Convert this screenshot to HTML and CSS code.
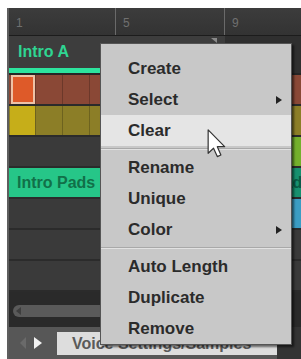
FILE: index.html
```html
<html>
<head>
    <title>Scene Context Menu</title>
    <link rel="stylesheet" href="styles.css">
</head>
<body>
    <div class="caption"><span>Editing</span><span class="cap-b">Using</span></div>

    <div class="app">
        <div class="ruler">
            <div class="bar">1</div>
            <div class="bar">5</div>
            <div class="bar">9</div>
        </div>

        <div class="scene-row">
            <div class="scene">Intro A<i class="scene-end"></i></div>
        </div>

        <div class="tracks">
            <div class="track">
                <div class="clip clip-wide clip-red"><span class="cell cell-selected"></span></div>
            </div>
            <div class="track">
                <div class="clip clip-wide clip-yellow"><span class="cell cell-yellow"></span></div>
            </div>
            <div class="track">
                <div class="clip clip-end clip-lime"></div>
            </div>
            <div class="track">
                <div class="clip clip-scene clip-mint">Intro Pads</div>
                <div class="clip clip-teal">Intro Pads</div>
            </div>
            <div class="track">
                <div class="clip clip-end clip-blue"></div>
            </div>
            <div class="track"></div>
            <div class="track"></div>
        </div>

        <div class="scroll-area">
            <div class="scrollbar"><i class="scroll-arrow"></i></div>
        </div>

        <div class="footer">
            <i class="nav-prev"></i>
            <i class="nav-next"></i>
            <div class="field">Voice Settings/Samples</div>
            <div class="footer-end"></div>
        </div>

        <ul class="menu">
            <li class="menu-item">Create</li>
            <li class="menu-item">Select<i class="submenu"></i></li>
            <li class="menu-item active">Clear</li>
            <li class="menu-sep"></li>
            <li class="menu-item">Rename</li>
            <li class="menu-item">Unique</li>
            <li class="menu-item">Color<i class="submenu"></i></li>
            <li class="menu-sep"></li>
            <li class="menu-item">Auto Length</li>
            <li class="menu-item">Duplicate</li>
            <li class="menu-item">Remove</li>
        </ul>

        <svg class="cursor" width="20" height="30" viewBox="0 0 13 20">
            <path d="M0.6 0.6 L0.6 16.2 L4.2 12.8 L6.7 18.4 L9.1 17.3 L6.7 11.8 L11.6 11.8 Z" fill="#ffffff" stroke="#333333" stroke-width="0.8" stroke-linejoin="round"/>
        </svg>
    </div>
</body>
</html>
```

FILE: styles.css
```css
* {
    box-sizing: border-box;
}

body {
    margin: 0;
    background-color: #ffffff;
    font-family: "Liberation Sans", Arial, sans-serif;
}

.caption {
    display: flex;
    height: 8px;
    overflow: hidden;
    padding-left: 58px;
    font-size: 18px;
    line-height: 20px;
    color: #555;
}

.caption span {
    margin-top: -20px;
}

.caption .cap-b {
    margin-left: 38px;
}

.app {
    position: relative;
    height: 351px;
    margin-left: 7px;
    border-left: 2px solid #5e5e5e;
    background-color: #2b2b2b;
    overflow: hidden;
}

/* ruler */
.ruler {
    display: grid;
    grid-template-columns: 107px 109px 1fr;
    height: 28px;
    border-bottom: 1px solid #1c1c1c;
    background: linear-gradient(#3c3c3c, #333);
}

.bar {
    padding: 8px 0 0 7px;
    border-right: 1px solid #6a6a6a;
    font-size: 12px;
    color: #707070;
}

.bar:last-child {
    border-right: none;
}

/* scene row */
.scene-row {
    display: grid;
    grid-template-columns: 216px 1fr;
    height: 39px;
    border-bottom: 2px solid #262626;
    background-color: #2f2f2f;
}

.scene {
    display: flex;
    align-items: center;
    justify-content: space-between;
    padding-left: 9px;
    border-bottom: 5px solid #2de49e;
    background-color: #3d3d3d;
    font-size: 16px;
    font-weight: bold;
    color: #2fd592;
}

.scene-end {
    align-self: flex-start;
    margin: 2px 8px 0 0;
    border-top: 5px solid #8a8a8a;
    border-left: 6px solid transparent;
}

/* tracks */
.track {
    display: grid;
    grid-template-columns: 107px 109px 1fr;
    height: 31px;
    border-bottom: 2px solid #2b2b2b;
    background-color: #3a3a3a;
}

.clip {
    height: 29px;
    overflow: hidden;
    white-space: nowrap;
}

.clip-wide {
    grid-column: 1 / 4;
}

.clip-scene {
    grid-column: 1 / 3;
}

.clip-end {
    grid-column: 3;
}

.clip-red, .clip-yellow {
    background-image: repeating-linear-gradient(90deg, transparent 0 26px, rgba(0, 0, 0, 0.22) 26px 27px);
}

.clip-red {
    background-color: #8a4836;
}

.clip-yellow {
    background-color: #8c7e27;
}

.cell {
    display: block;
    height: 29px;
}

.cell-selected {
    width: 24px;
    margin-left: 2px;
    border: 2px solid #eec2a6;
    background-color: #de5a29;
}

.cell-yellow {
    width: 25px;
    margin-left: 1px;
    background-color: #c6ae19;
}

.clip-lime {
    background-color: #74b02c;
}

.clip-mint, .clip-teal {
    padding: 6px 0 0 8px;
    font-size: 16px;
    font-weight: bold;
}

.clip-mint {
    background-color: #26c688;
    color: #117048;
}

.clip-teal {
    background-color: #17906f;
    color: #0b5a44;
}

.clip-blue {
    background-color: #3b9dc4;
}

/* scroll bar */
.scroll-area {
    height: 35px;
    padding: 13px 0 0 4px;
    background-color: #2a2a2a;
}

.scrollbar {
    display: flex;
    align-items: center;
    width: 240px;
    height: 12px;
    padding-left: 3px;
    border-radius: 6px;
    background-color: #5a5a5a;
}

.scroll-arrow {
    border-right: 5px solid #3e3e3e;
    border-top: 4px solid transparent;
    border-bottom: 4px solid transparent;
}

/* footer */
.footer {
    display: flex;
    align-items: center;
    height: 32px;
    padding-left: 11px;
    background-color: #575757;
}

.nav-prev {
    border-right: 6px solid #6a6a6a;
    border-top: 6px solid transparent;
    border-bottom: 6px solid transparent;
}

.nav-next {
    margin-left: 8px;
    border-left: 8px solid #f2f2f2;
    border-top: 6px solid transparent;
    border-bottom: 6px solid transparent;
}

.field {
    width: 220px;
    height: 23px;
    margin-left: 15px;
    padding: 3px 0 0 15px;
    background-color: #dddddd;
    font-size: 16px;
    font-weight: bold;
    color: #5a5a5a;
    white-space: nowrap;
    overflow: hidden;
}

.footer-end {
    align-self: stretch;
    flex: 1;
    background-color: #343434;
}

/* context menu */
.menu {
    position: absolute;
    left: 91px;
    top: 35px;
    width: 192px;
    margin: 0;
    padding: 9px 0 0;
    list-style: none;
    border: 1px solid #555;
    background-color: #c8c8c8;
    box-shadow: 2px 2px 2px rgba(0, 0, 0, 0.55);
}

.menu-item {
    display: flex;
    align-items: center;
    height: 31px;
    padding-left: 27px;
    font-size: 17px;
    font-weight: bold;
    color: #2b2b2b;
}

.menu-item.active {
    background-color: #e5e5e5;
}

.submenu {
    margin: 0 9px 0 auto;
    border-left: 6px solid #222;
    border-top: 4px solid transparent;
    border-bottom: 4px solid transparent;
}

.menu-sep {
    height: 6px;
    padding-top: 2px;
}

.menu-sep::after {
    content: "";
    display: block;
    height: 1px;
    border-bottom: 1px solid #e2e2e2;
    background-color: #a9a9a9;
}

.cursor {
    position: absolute;
    left: 198px;
    top: 121px;
}
```
